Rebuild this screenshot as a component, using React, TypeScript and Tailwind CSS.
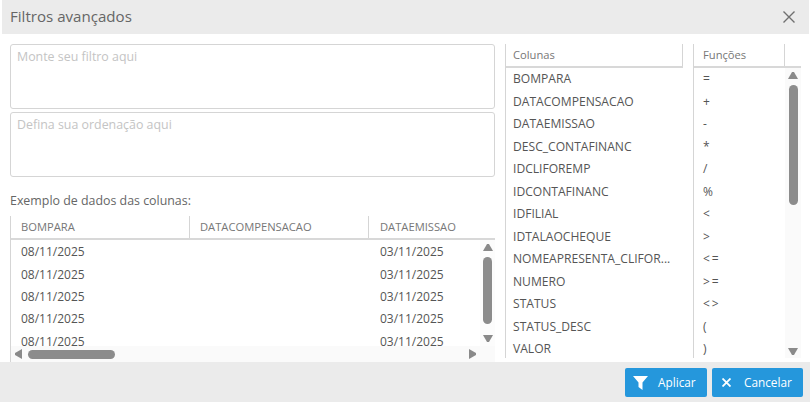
const COLUMNS = [
  "BOMPARA",
  "DATACOMPENSACAO",
  "DATAEMISSAO",
  "DESC_CONTAFINANC",
  "IDCLIFOREMP",
  "IDCONTAFINANC",
  "IDFILIAL",
  "IDTALAOCHEQUE",
  "NOMEAPRESENTA_CLIFOR...",
  "NUMERO",
  "STATUS",
  "STATUS_DESC",
  "VALOR",
];
const FUNCTIONS = ["=", "+", "-", "*", "/", "%", "<", ">", "<=", ">=", "<>", "(", ")"];
const SAMPLE_ROWS = [0, 1, 2, 3, 4];

function Arrow({ dir, className }: { dir: "up" | "down" | "left" | "right"; className: string }) {
  const points = {
    up: "4,0 6,0 10,7 0,7",
    down: "0,0 10,0 6,7 4,7",
    left: "7,0 7,10 0,6 0,4",
    right: "0,0 0,10 7,6 7,4",
  }[dir];
  return (
    <svg viewBox={dir === "up" || dir === "down" ? "0 0 10 7" : "0 0 7 10"} className={className} fill="#8a8a8a">
      <polygon points={points} />
    </svg>
  );
}

function FilterBox({ placeholder }: { placeholder: string }) {
  return (
    <div className="h-[65px] rounded-[3px] border border-[#d5d5d5] bg-white px-[6px] pt-[3px] text-[12.4px] leading-[18px] text-[#c4c4c4]">
      {placeholder}
    </div>
  );
}

function SampleTable() {
  return (
    <div className="relative h-[146px] overflow-hidden border-l border-[#d5d5d5]">
      <div className="flex h-[24px] items-start border-b-2 border-[#d8d8d8] text-[11.2px] text-[#777]">
        <div className="h-[22px] w-[179px] shrink-0 border-r border-[#d5d5d5] pl-[10px] leading-[21px]">BOMPARA</div>
        <div className="h-[22px] w-[179px] shrink-0 border-r border-[#d5d5d5] pl-[10px] leading-[21px]">DATACOMPENSACAO</div>
        <div className="pl-[11px] leading-[21px]">DATAEMISSAO</div>
      </div>
      <div className="pt-[1px] text-[#555]">
        {SAMPLE_ROWS.map((row) => (
          <div key={row} className="flex h-[22.4px] items-center leading-[22px]">
            <div className="w-[179px] shrink-0 pl-[10px]">08/11/2025</div>
            <div className="w-[179px] shrink-0" />
            <div className="pl-[11px]">03/11/2025</div>
          </div>
        ))}
      </div>

      {/* scrollbars sit on top of the grid */}
      <div className="absolute right-0 top-[24px] bottom-[16px] flex w-[15px] flex-col items-center bg-[#fcfcfc] pt-[4px]">
        <Arrow dir="up" className="h-[7px] w-[10px]" />
        <div className="mt-[6px] h-[67px] w-[9px] rounded-full bg-[#8c8c8c]" />
        <Arrow dir="down" className="mt-[11px] h-[7px] w-[10px]" />
      </div>
      <div className="absolute inset-x-0 bottom-0 flex h-[16px] items-center bg-[#fafafa] pl-[4px] pr-[19px]">
        <Arrow dir="left" className="h-[10px] w-[7px]" />
        <div className="ml-[6px] h-[9px] w-[87px] rounded-full bg-[#8c8c8c]" />
        <Arrow dir="right" className="ml-auto h-[10px] w-[7px]" />
      </div>
    </div>
  );
}

function ListHeader({ title, className }: { title: string; className: string }) {
  return (
    <div className="flex h-[24px] border-b-2 border-[#d8d8d8] text-[11.2px] text-[#777]">
      <div className={`h-[22px] border-r border-[#d5d5d5] leading-[21px] ${className}`}>{title}</div>
    </div>
  );
}

export default function App() {
  return (
    <div className="flex h-[402px] w-[810px] flex-col overflow-hidden bg-white font-['Open_Sans',sans-serif] text-[12px]">
      <header className="ml-[2px] mr-[1px] flex h-[34px] shrink-0 items-center justify-between bg-[#ebebeb] pl-[8px] pr-[14px]">
        <h1 className="pb-[1px] text-[15.1px] text-[#666]">Filtros avançados</h1>
        <svg viewBox="0 0 12 12" className="h-[12px] w-[12px]" stroke="#707070" strokeWidth="1.4" fill="none">
          <path d="M0.5 0.5 11.5 11.5M11.5 0.5 0.5 11.5" />
        </svg>
      </header>

      <main className="flex min-h-0 flex-1 pl-[10px] pr-[9px] pt-[10px]">
        <section className="flex w-[485px] shrink-0 flex-col gap-[3px]">
          <FilterBox placeholder="Monte seu filtro aqui" />
          <FilterBox placeholder="Defina sua ordenação aqui" />
          <div className="mt-[11px] h-[22px] text-[12.4px] leading-[20px] text-[#666]">Exemplo de dados das colunas:</div>
          <SampleTable />
        </section>

        <section className="ml-[10px] h-[314px] w-[178px] shrink-0 border-l border-[#d5d5d5]">
          <ListHeader title="Colunas" className="w-full pl-[7px]" />
          <ul className="text-[12.1px] text-[#555]">
            {COLUMNS.map((name) => (
              <li key={name} className="h-[22.5px] pl-[7px] leading-[22px]">
                {name}
              </li>
            ))}
          </ul>
        </section>

        <section className="relative ml-[10px] h-[314px] w-[108px] shrink-0 border-l border-[#d5d5d5]">
          <ListHeader title="Funções" className="w-[91px] pl-[9px]" />
          <ul className="tracking-[2px] text-[#555]">
            {FUNCTIONS.map((fn) => (
              <li key={fn} className="h-[22.5px] pl-[9px] leading-[22px]">
                {fn}
              </li>
            ))}
          </ul>
          <div className="absolute bottom-0 right-0 top-[24px] flex w-[16px] flex-col items-center bg-[#fafafa] pt-[4px]">
            <Arrow dir="up" className="h-[7px] w-[10px]" />
            <div className="mt-[6px] h-[120px] w-[9px] rounded-full bg-[#8c8c8c]" />
            <Arrow dir="down" className="mt-auto mb-[3px] h-[7px] w-[10px]" />
          </div>
        </section>
      </main>

      <footer className="flex h-[40px] shrink-0 items-start justify-end gap-[5px] bg-[#ebebeb] pr-[7px] pt-[6px]">
        <button className="flex h-[29px] w-[82px] items-center rounded-[2px] bg-[#2597dc] pl-[8px] text-white">
          <svg viewBox="0 0 15 14" className="h-[14px] w-[15px]" fill="white">
            <path d="M0 0H15L9.5 6.5V14L5.5 11V6.5Z" />
          </svg>
          <span className="ml-[10px] text-[11.8px]">Aplicar</span>
        </button>
        <button className="flex h-[29px] w-[91px] items-center rounded-[2px] bg-[#2597dc] pl-[10px] text-white">
          <svg viewBox="0 0 9 9" className="h-[9px] w-[9px]" stroke="white" strokeWidth="1.8" fill="none">
            <path d="M0.5 0.5 8.5 8.5M8.5 0.5 0.5 8.5" />
          </svg>
          <span className="ml-[13px] text-[11.8px]">Cancelar</span>
        </button>
      </footer>
    </div>
  );
}
